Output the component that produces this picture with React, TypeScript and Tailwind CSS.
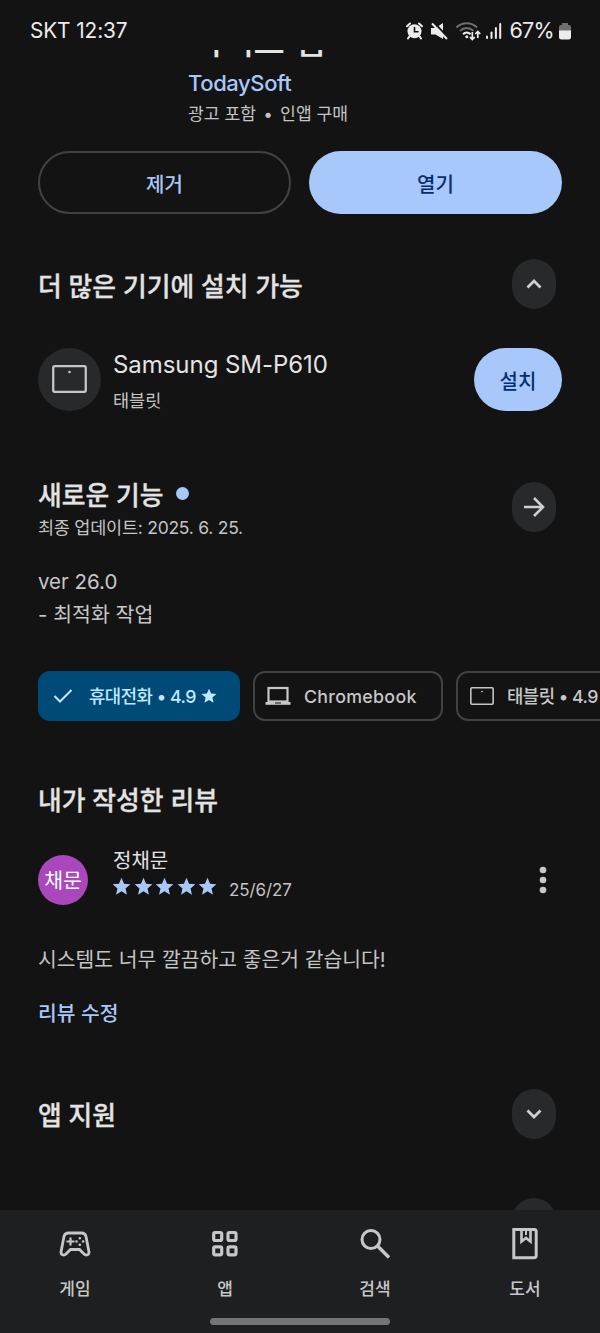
import type { ReactNode } from "react";

const STAR =
  "M12 1l3.200 7.400 8 .7-6.100 5.300 1.800 7.900-6.900-4.200-6.900 4.200 1.800-7.900L.8 9.100l8-.7z";

function Star({ className }: { className: string }) {
  return (
    <svg viewBox="0 0 24 24" fill="currentColor" className={className}>
      <path d={STAR} />
    </svg>
  );
}

function Heading({ children }: { children: ReactNode }) {
  return (
    <h2 className="text-[25.800px] leading-9 font-medium [-webkit-text-stroke:0.300px_currentColor]">{children}</h2>
  );
}

function RoundButton({ children }: { children?: ReactNode }) {
  return (
    <button className="flex h-[50px] w-11 shrink-0 items-center justify-center rounded-full bg-[#28292b] text-[#d0d0d0]">
      {children}
    </button>
  );
}

function Chevron({ up }: { up?: boolean }) {
  return (
    <svg width="16" height="10" viewBox="0 0 16 10" fill="none" stroke="currentColor" strokeWidth="2.800">
      <path d={up ? "M1.500 8.500L8 2l6.500 6.500" : "M1.500 1.500L8 8l6.500-6.500"} />
    </svg>
  );
}

function StatusBar() {
  return (
    <header className="flex h-[50px] shrink-0 items-center justify-between pt-3 pr-[28px] pl-[30px] text-[#ececec]">
      <span className="text-[20.800px] leading-none tracking-[-0.100px]">SKT 12:37</span>
      <div className="flex items-center">
        <svg width="17" height="18" viewBox="0 0 17 18" fill="none" stroke="currentColor" strokeLinecap="round">
          <circle cx="8.500" cy="9.200" r="7" fill="currentColor" stroke="none" />
          <path d="M1 4.300L4 1.500M16 4.300L13 1.500" strokeWidth="2" />
          <path d="M3.300 14.500L2 16.500M13.700 14.500L15 16.500" strokeWidth="2" />
          <path d="M8.500 5.500V9.700H12" stroke="#131313" strokeWidth="1.600" />
        </svg>
        <svg className="ml-2" width="17" height="18" viewBox="0 0 17 18">
          <path d="M0 6H4.500L12 1V17L4.500 12.500H0z" fill="currentColor" />
          <path d="M2.500 0L17 15.500" stroke="#131313" strokeWidth="2" />
          <path d="M1 1.500L16 17" stroke="currentColor" strokeWidth="2" />
        </svg>
        <svg className="ml-[7px]" width="27" height="20" viewBox="0 0 27 20" fill="none">
          <path d="M1.500 6.500C7 .8 16.500.8 22 6.500M5 9.900C9 6 14.500 6 18.500 9.900" stroke="#6f6f6f" strokeWidth="2" />
          <path d="M8 13.200C10.200 11 13.300 11 15.500 13.200" stroke="currentColor" strokeWidth="2" />
          <circle cx="11.800" cy="15.800" r="1.500" fill="currentColor" />
          <path d="M17.300 11V18.500M14.800 16L17.300 18.500L19.800 16M22.800 17V10.500M20.300 13L22.800 10.500L25.300 13" stroke="currentColor" strokeWidth="1.700" />
        </svg>
        <svg className="ml-1" width="17" height="18" viewBox="0 0 17 18" fill="currentColor">
          <rect x="0" y="13.500" width="2" height="3.500" rx="1" />
          <rect x="4.500" y="9.500" width="2" height="7.500" rx="1" />
          <rect x="8.900" y="5" width="2" height="12" rx="1" />
          <rect x="13.200" y="1" width="2" height="16" rx="1" />
        </svg>
        <span className="ml-[6px] text-[21.500px] leading-none tracking-[-0.700px]">67%</span>
        <svg className="ml-1" width="14" height="18" viewBox="0 0 14 18">
          <path d="M4 1H10V3H11Q13 3 13 5V9H1V5Q1 3 3 3H4z" fill="#6f6f6f" />
          <path d="M1 8.500H13V15Q13 17.500 10.500 17.500H3.500Q1 17.500 1 15z" fill="currentColor" />
        </svg>
      </div>
    </header>
  );
}

function Tablet({ className }: { className: string }) {
  return (
    <svg viewBox="0 0 34 28" preserveAspectRatio="none" fill="none" className={className}>
      <rect x="1.200" y="1.200" width="31.600" height="25.600" rx="1.500" stroke="currentColor" strokeWidth="2.200" />
      <circle cx="17" cy="7" r="1.300" fill="currentColor" />
    </svg>
  );
}

const navItems = [
  {
    label: "게임",
    icon: (
      <>
        <path d="M9.500 5H22.500C25 5 26.500 6.500 27 8.500L29.900 23.500C30.600 27 27 28 25 26L20.500 21.500H11.500L7 26C5 28 1.400 27 2.100 23.500L5 8.500C5.500 6.500 7 5 9.500 5Z" strokeWidth="2.800" />
        <path d="M11.500 9.500V17.500M7.500 13.500H15.500" strokeWidth="2.200" />
        <path d="M20.800 10.200h.01M20.800 16.800h.01M17.500 13.500h.01M24.100 13.500h.01" strokeWidth="2.600" strokeLinecap="round" />
      </>
    ),
  },
  {
    label: "앱",
    icon: (
      <>
        <rect x="4.700" y="4.500" width="8" height="8" rx="1.500" strokeWidth="3.200" />
        <rect x="19" y="4.500" width="8" height="8" rx="1.500" strokeWidth="3.200" />
        <rect x="4.700" y="18.800" width="8" height="8" rx="1.500" strokeWidth="3.200" />
        <rect x="19" y="18.800" width="8" height="8" rx="1.500" strokeWidth="3.200" />
      </>
    ),
  },
  {
    label: "검색",
    icon: (
      <>
        <circle cx="12" cy="11.500" r="9" strokeWidth="3" />
        <path d="M18.300 17.800L30 29.500" strokeWidth="3.400" />
      </>
    ),
  },
  {
    label: "도서",
    icon: (
      <>
        <path d="M4.800 1.400H25Q27.200 1.400 27.200 3.600V27.600Q27.200 29.800 25 29.800H4.800Z" strokeWidth="3" />
        <path d="M12.500 1.500V13.500L17 10L21.500 13.500V1.500" strokeWidth="2.600" />
        <path d="M17 2V7" strokeWidth="2" />
      </>
    ),
  },
];

export default function App() {
  return (
    <div className="flex h-[1333px] w-[600px] flex-col overflow-hidden bg-[#131313] font-['Inter','Noto_Sans_CJK_KR',sans-serif] text-[#e3e3e3]">
      <StatusBar />

      <main className="flex min-h-0 flex-1 flex-col overflow-hidden">
        <div className="flex h-[101px] shrink-0 flex-col pl-[188px]">
          <div className="flex h-[10px] items-end overflow-hidden pl-[3px]">
            <h1 className="mb-[-4px] shrink-0 text-[34px] leading-[44px] font-medium whitespace-nowrap">이젝트 앱</h1>
          </div>
          <a className="mt-2 text-[22px] leading-[30px] font-medium tracking-[-0.400px] text-[#a8c7fa]">TodaySoft</a>
          <p className="mt-1 flex text-[17.200px] leading-6 text-[#c4c4c4]">
            광고 포함
            <span className="w-6 text-center">•</span>
            인앱 구매
          </p>
        </div>

        <div className="grid shrink-0 grid-cols-2 gap-[18px] px-[38px]">
          <button className="h-[63px] rounded-full border-2 border-[#414343] pt-[5px] text-[20px] font-medium text-[#a8c7fa]">제거</button>
          <button className="h-[63px] rounded-full bg-[#a8c7fa] pt-[5px] text-[20px] font-medium text-[#062e6f]">열기</button>
        </div>

        <section className="mt-[45px] flex shrink-0 items-center justify-between pr-11 pl-[38px]">
          <div className="pt-[5px]">
            <Heading>더 많은 기기에 설치 가능</Heading>
          </div>
          <RoundButton>
            <Chevron up />
          </RoundButton>
        </section>

        <section className="mt-[38px] flex h-[64px] shrink-0 items-center pr-[38px] pl-[38px]">
          <div className="flex size-[63px] items-center justify-center rounded-full bg-[#28292a] text-[#c7c7c7]">
            <Tablet className="h-7 w-[35px]" />
          </div>
          <div className="ml-3 flex-1 pt-[3px]">
            <p className="text-[24px] leading-8 tracking-[-0.050px]">Samsung SM-P610</p>
            <p className="mt-2 text-[17.500px] leading-6 text-[#c4c4c4]">태블릿</p>
          </div>
          <button className="h-[63px] w-[88px] rounded-[32px] bg-[#a8c7fa] pt-[5px] text-[20px] font-medium text-[#062e6f]">설치</button>
        </section>

        <section className="mt-[66px] flex shrink-0 items-start justify-between pr-11 pl-[38px]">
          <div className="pt-px">
            <div className="flex items-center">
              <Heading>새로운 기능</Heading>
              <span className="mb-[5px] ml-3 size-[13px] rounded-full bg-[#a8c7fa]" />
            </div>
            <p className="text-[17.500px] leading-7 tracking-[-0.250px] text-[#c4c4c4]">최종 업데이트: 2025. 6. 25.</p>
          </div>
          <div className="mt-[5px]">
            <RoundButton>
              <svg width="22" height="20" viewBox="0 0 22 20" fill="none" stroke="currentColor" strokeWidth="2.600">
                <path d="M1 10H20M11 1L20 10L11 19" />
              </svg>
            </RoundButton>
          </div>
        </section>
        <p className="mt-[23px] shrink-0 pl-[38px] text-[20.500px] leading-[33px] text-[#c7c7c7]">
          ver 26.0
          <br />- 최적화 작업
        </p>

        <div className="mt-10 flex shrink-0 gap-[13px] overflow-hidden pl-[38px] text-[17.800px] font-medium whitespace-nowrap text-[#c7c7c7]">
          <div className="flex h-[50px] w-[202px] shrink-0 items-center rounded-xl bg-[#004a77] pl-[15px] text-[#c2e7ff]">
            <svg width="20" height="16" viewBox="0 0 20 16" fill="none" stroke="currentColor" strokeWidth="2">
              <path d="M1.500 8L7 13.500L18.500 2" />
            </svg>
            <span className="ml-4 pt-[3px] tracking-[-0.500px]">휴대전화 • 4.9</span>
            <Star className="ml-[5px] size-4" />
          </div>
          <div className="flex h-[50px] w-[190px] shrink-0 items-center rounded-xl border-2 border-[#414343] pl-[10px]">
            <svg width="26" height="20" viewBox="0 0 26 20" fill="none">
              <rect x="3.500" y="2" width="19" height="13.500" stroke="currentColor" strokeWidth="2.200" />
              <path d="M.5 16H25.500V18.800H.5z" fill="currentColor" />
              <path d="M10 17H16" stroke="#131313" strokeWidth="1" />
            </svg>
            <span className="ml-[13px] pt-[3px] tracking-[0.300px]">Chromebook</span>
          </div>
          <div className="flex h-[50px] w-[203px] shrink-0 items-center rounded-xl border-2 border-[#414343] pl-3">
            <Tablet className="h-[18px] w-[24px]" />
            <span className="ml-[13px] pt-[3px] tracking-[-0.500px]">태블릿 • 4.9</span>
          </div>
        </div>

        <div className="mt-[62px] shrink-0 pl-[38px]">
          <Heading>내가 작성한 리뷰</Heading>
        </div>

        <section className="mt-[25px] flex shrink-0 items-center pr-[52px] pl-[38px]">
          <div className="mt-[11px] flex size-[50px] items-center justify-center rounded-full bg-[#ab47bc] text-[20.500px] text-white">
            <span className="pt-[3px]">채문</span>
          </div>
          <div className="ml-6 flex-1">
            <p className="pl-px text-[20px] leading-7">정채문</p>
            <div className="flex items-center">
              <div className="mb-1 flex gap-[2.500px] text-[#a8c7fa]">
                {[0, 1, 2, 3, 4].map((i) => (
                  <Star key={i} className="size-[19px]" />
                ))}
              </div>
              <span className="mt-[3px] ml-3 text-[17px] leading-6 tracking-[-0.100px] text-[#c4c4c4]">25/6/27</span>
            </div>
          </div>
          <svg className="mt-[11px]" width="10" height="28" viewBox="0 0 10 28" fill="#c7c7c7">
            <circle cx="5" cy="4" r="3.300" />
            <circle cx="5" cy="14" r="3.300" />
            <circle cx="5" cy="24" r="3.300" />
          </svg>
        </section>

        <p className="mt-[41px] shrink-0 pl-[38px] text-[20.400px] leading-7 text-[#c4c4c4]">시스템도 너무 깔끔하고 좋은거 같습니다!</p>
        <a className="mt-[26px] shrink-0 pl-[38px] text-[20.400px] leading-7 font-medium text-[#a8c7fa]">리뷰 수정</a>

        <section className="mt-[61px] flex shrink-0 items-center justify-between pr-11 pl-[38px]">
          <div className="pt-[3px]">
            <Heading>앱 지원</Heading>
          </div>
          <RoundButton>
            <Chevron />
          </RoundButton>
        </section>
        <div className="mt-[59px] flex shrink-0 justify-end pr-11">
          <RoundButton />
        </div>
      </main>

      <nav className="flex h-[123px] shrink-0 flex-col items-center bg-[#1e1f20] text-[#c7c7c7]">
        <div className="flex w-full pt-[18px]">
          {navItems.map((item) => (
            <a key={item.label} className="flex flex-1 flex-col items-center">
              <svg width="32" height="32" viewBox="0 0 32 32" fill="none" stroke="currentColor">
                {item.icon}
              </svg>
              <span className="mt-[17px] text-[17px] leading-6 font-medium">{item.label}</span>
            </a>
          ))}
        </div>
        <div className="mt-[17px] h-[7px] w-[180px] rounded-full bg-[#757575]" />
      </nav>
    </div>
  );
}
